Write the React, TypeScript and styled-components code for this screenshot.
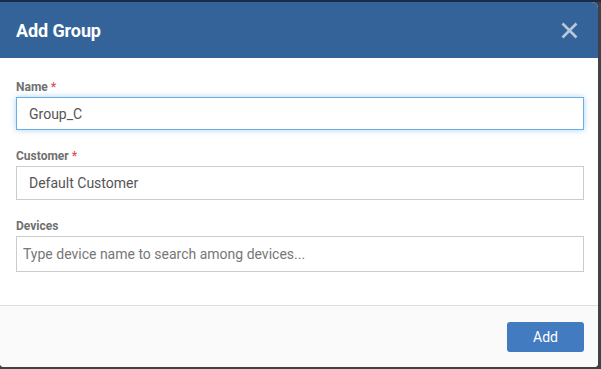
import React from "react";
import styled, { createGlobalStyle } from "styled-components";

const Global = createGlobalStyle`
  html, body { margin: 0; padding: 0; }
  body {
    width: 601px;
    height: 369px;
    overflow: hidden;
    background: #3a3d42;
    font-family: Roboto, "Noto Sans", Arial, sans-serif;
  }
`;

const Backdrop = styled.div`
  width: 601px;
  height: 369px;
  box-sizing: border-box;
  padding: 2px 3px 2px 0;
  background: linear-gradient(#1c2a44 0 2px, #3f4146 2px);
`;

const Dialog = styled.div`
  width: 598px;
  height: 365px;
  background: #fff;
  border-radius: 0 6px 4px 4px;
  overflow: hidden;
  display: flex;
  flex-direction: column;
`;

const Header = styled.div`
  height: 56px;
  flex: none;
  background: #34639a;
  display: flex;
  align-items: center;
  justify-content: space-between;
  padding: 0 16px 0 16px;
  box-sizing: border-box;
`;

const Title = styled.h1`
  margin: 0;
  font-size: 18px;
  font-weight: 700;
  color: #fff;
  letter-spacing: -0.1px;
`;

const Close = styled.button`
  border: 0;
  background: none;
  padding: 0;
  width: 18px;
  height: 18px;
  margin-right: 4px;
  display: flex;
  align-items: center;
  justify-content: center;
  cursor: pointer;
`;

const Body = styled.div`
  flex: 1;
  padding: 22px 16px 0 16px;
  display: flex;
  flex-direction: column;
  gap: 19px;
`;

const Field = styled.div`
  display: flex;
  flex-direction: column;
  gap: 3px;
`;

const Label = styled.label`
  font-size: 12px;
  font-weight: 700;
  color: #707070;
  line-height: 14px;
`;

const Req = styled.span`
  color: #e05252;
  margin-left: 3px;
`;

const Input = styled.input<{ $focus?: boolean; $h?: number; $pad?: number }>`
  box-sizing: border-box;
  width: 568px;
  height: ${(p) => p.$h ?? 33}px;
  border: 1px solid ${(p) => (p.$focus ? "#66afe9" : "#cccccc")};
  box-shadow: ${(p) => (p.$focus ? "0 0 6px rgba(102,175,233,0.55)" : "none")};
  border-radius: 0;
  outline: none;
  padding: 0 ${(p) => p.$pad ?? 12}px;
  font-family: Roboto, "Noto Sans", Arial, sans-serif;
  font-size: 14px;
  color: #555;
  &::placeholder { color: #777; }
`;

const Footer = styled.div`
  height: 61px;
  flex: none;
  border-top: 1px solid #dedede;
  background: #fafafa;
  display: flex;
  align-items: center;
  justify-content: flex-end;
  padding: 0 14px 0 16px;
`;

const Button = styled.button`
  width: 77px;
  height: 30px;
  border: 0;
  border-radius: 3px;
  background: #427bbf;
  color: #fff;
  font-family: Roboto, "Noto Sans", Arial, sans-serif;
  font-size: 14px;
  cursor: pointer;
`;

export default function App() {
  return (
    <>
      <Global />
      <Backdrop>
        <Dialog>
          <Header>
            <Title>Add Group</Title>
            <Close aria-label="close">
              <svg width="17" height="17" viewBox="0 0 17 17">
                <path d="M1.5 1.5 L15.5 15.5 M15.5 1.5 L1.5 15.5" stroke="#b8c7da" strokeWidth="2.6" strokeLinecap="butt" />
              </svg>
            </Close>
          </Header>
          <Body>
            <Field>
              <Label>Name<Req>*</Req></Label>
              <Input $focus defaultValue="Group_C" $h={33} />
            </Field>
            <Field>
              <Label>Customer<Req>*</Req></Label>
              <Input defaultValue="Default Customer" $h={34} />
            </Field>
            <Field>
              <Label>Devices</Label>
              <Input placeholder="Type device name to search among devices..." $h={36} $pad={6} />
            </Field>
          </Body>
          <Footer>
            <Button>Add</Button>
          </Footer>
        </Dialog>
      </Backdrop>
    </>
  );
}
